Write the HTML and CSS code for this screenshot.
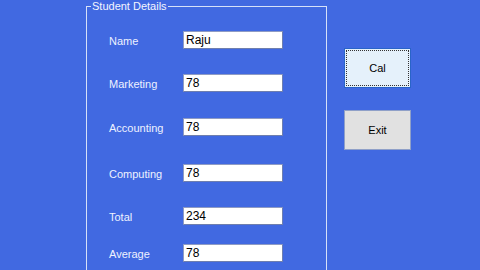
FILE: index.html
```html
<!DOCTYPE html>
<html>
<head>
<meta charset="utf-8">
<link rel="stylesheet" href="styles.css">
</head>
<body>
<div class="window">
  <fieldset class="group">
    <legend class="legend">Student Details</legend>
    <div class="row r1"><span class="label">Name</span><div class="box">Raju</div></div>
    <div class="row r2"><span class="label">Marketing</span><div class="box">78</div></div>
    <div class="row r3"><span class="label">Accounting</span><div class="box">78</div></div>
    <div class="row r4"><span class="label">Computing</span><div class="box">78</div></div>
    <div class="row r5"><span class="label">Total</span><div class="box">234</div></div>
    <div class="row r6"><span class="label">Average</span><div class="box">78</div></div>
  </fieldset>
  <div class="buttons">
    <button class="btn btn-cal"><span class="focus">Cal</span></button>
    <button class="btn btn-exit">Exit</button>
  </div>
</div>
</body>
</html>
```
FILE: styles.css
```css
html, body {
  margin: 0;
  padding: 0;
  width: 480px;
  height: 270px;
  overflow: hidden;
  background: #4169e1;
  font-family: "Liberation Sans", Arial, sans-serif;
}
.window {
  display: flex;
  align-items: flex-start;
  padding-left: 86px;
  height: 270px;
}
.group {
  box-sizing: border-box;
  width: 241px;
  height: 270px;
  margin: 0;
  padding: 0;
  border: 1px solid #d6e0f8;
  border-bottom: none;
  min-inline-size: 0;
}
.legend {
  font-size: 11px;
  line-height: 13px;
  color: #f4f6ff;
  padding: 0 1px;
  margin-left: 4px;
}
.row {
  display: flex;
  align-items: center;
  height: 18px;
  padding-left: 22px;
}
.r1 { margin-top: 18px; }
.r2 { margin-top: 25px; }
.r3 { margin-top: 26px; }
.r4 { margin-top: 28px; }
.r5 { margin-top: 25px; }
.r6 { margin-top: 19px; }
.label {
  width: 74px;
  font-size: 11px;
  color: #eef2ff;
  padding-top: 2px;
}
.box {
  box-sizing: border-box;
  width: 100px;
  height: 18px;
  background: #fff;
  border: 1px solid #8e9bc4;
  border-right-color: #6f7fae;
  border-bottom-color: #6f7fae;
  font-size: 12px;
  line-height: 16px;
  color: #000;
  padding-left: 2px;
}
.buttons {
  display: flex;
  flex-direction: column;
  gap: 22px;
  margin-left: 17px;
  margin-top: 48px;
}
.btn {
  box-sizing: border-box;
  width: 67px;
  height: 40px;
  margin: 0;
  padding: 0;
  font-family: "Liberation Sans", Arial, sans-serif;
  font-size: 11px;
  color: #000;
  display: flex;
  align-items: center;
  justify-content: center;
}
.btn-cal {
  background: #e5f1fb;
  border: 1px solid #2a64c8;
  padding: 1px;
}
.focus {
  box-sizing: border-box;
  width: 100%;
  height: 100%;
  border: 1px dotted #333;
  display: flex;
  align-items: center;
  justify-content: center;
}
.btn-exit {
  background: #e1e1e1;
  border: 1px solid #8fa0c8;
}
```
